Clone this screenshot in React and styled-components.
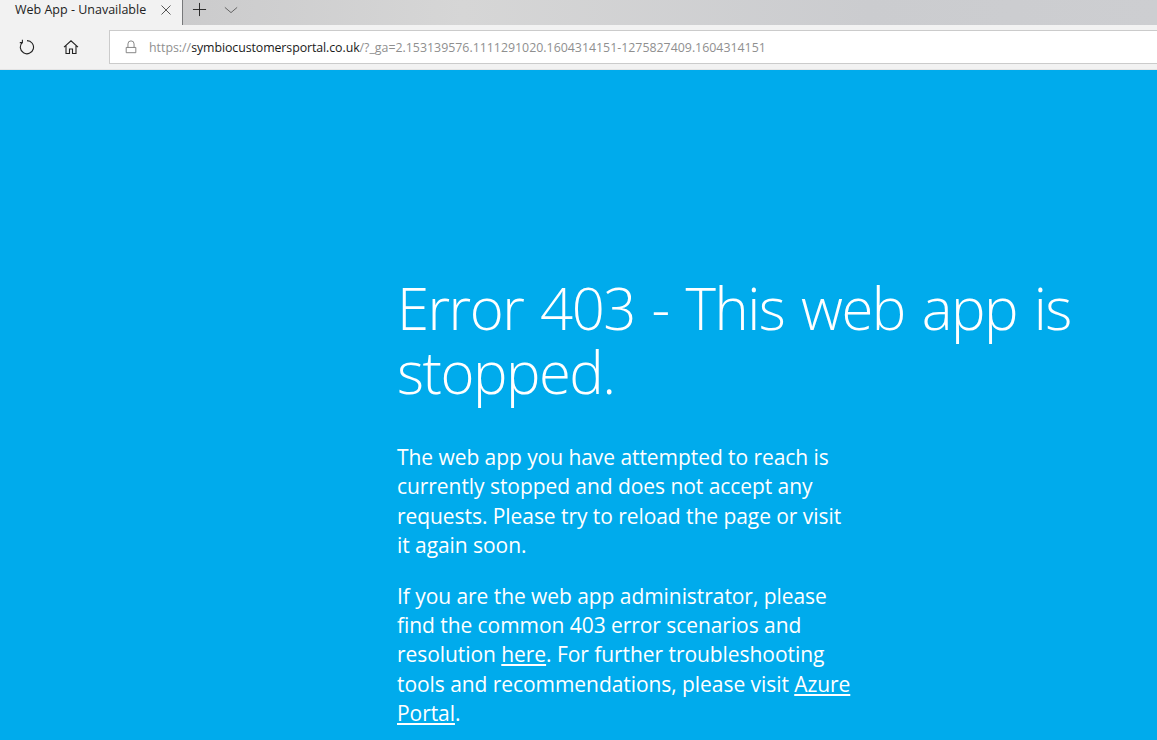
import React from 'react'
import styled, { createGlobalStyle } from 'styled-components'

const Global = createGlobalStyle`
  html, body { margin: 0; padding: 0; height: 100%; overflow: hidden; background: #00abec; }
  #root { height: 100%; }
`

const Page = styled.div`
  width: 1157px;
  height: 740px;
  display: flex;
  flex-direction: column;
  overflow: hidden;
  font-family: "Open Sans", "Noto Sans", sans-serif;
`

const TabStrip = styled.div`
  height: 25px;
  flex: none;
  display: flex;
  align-items: stretch;
  background: linear-gradient(90deg, #c4c4c6 0%, #d6d6d6 40%, #cbcccf 75%, #cdced1 100%);
`

const Tab = styled.div`
  width: 183px;
  display: flex;
  align-items: center;
  justify-content: space-between;
  box-sizing: border-box;
  padding: 0 10px 6px 15px;
  background: #f2f2f2;
  border-right: 1px solid #77787a;
  font-size: 12.5px;
  color: #222;
`

const TabAction = styled.div`
  display: flex;
  align-items: center;
  justify-content: center;
  width: 32px;
  padding-bottom: 6px;
  color: ${p => p.$color || '#222'};
`

const Toolbar = styled.div`
  height: 45px;
  flex: none;
  box-sizing: border-box;
  display: flex;
  align-items: center;
  padding: 5px 0 6px 0;
  background: #f2f2f2;
  border-bottom: 1px solid #e4e4e4;
`

const ToolButton = styled.div`
  width: 44px;
  display: flex;
  justify-content: center;
  color: #222;
  &:first-child { margin-left: 5px; }
`

const Address = styled.div`
  flex: 1;
  height: 34px;
  margin-left: 16px;
  box-sizing: border-box;
  display: flex;
  align-items: center;
  gap: 11px;
  padding-left: 14px;
  background: #fff;
  border: 1px solid #cbcbcb;
  border-right: none;
  font-size: 12.36px;
  color: #8f8f8f;
  white-space: nowrap;
  svg { color: #777; }
`

const Url = styled.span`
  padding-top: 1px;
`

const Host = styled.span`
  color: #1a1a1a;
  letter-spacing: -0.08px;
`

const Content = styled.main`
  flex: 1;
  min-height: 0;
  background: #00abec;
  color: #fff;
  padding: 206px 0 0 397px;
`

const Heading = styled.h1`
  margin: 0;
  font-size: 58px;
  line-height: 64px;
  font-weight: 300;
  letter-spacing: -1.5px;
  word-spacing: 3.2px;
  width: 720px;
`

const Para = styled.p`
  margin: 0;
  width: 456px;
  font-size: 21px;
  line-height: 29.4px;
  font-weight: 400;
  letter-spacing: -0.06px;
  & + & { margin-top: 21px; }
  h1 + & { margin-top: 39px; }
`

const Link = styled.a`
  color: inherit;
  text-decoration: underline;
`

function Icon({ size = 16, children, sw = 1 }) {
  return (
    <svg width={size} height={size} viewBox="0 0 16 16" fill="none" stroke="currentColor" strokeWidth={sw}>
      {children}
    </svg>
  )
}

export default function App() {
  return (
    <Page>
      <Global />
      <TabStrip>
        <Tab>
          <span>Web App - Unavailable</span>
          <Icon size={12}><path d="M2 2l12 12M14 2L2 14" /></Icon>
        </Tab>
        <TabAction>
          <Icon size={15}><path d="M8 1v14M1 8h14" /></Icon>
        </TabAction>
        <TabAction $color="#555">
          <Icon size={14}><path d="M1 5l7 6 7-6" /></Icon>
        </TabAction>
      </TabStrip>
      <Toolbar>
        <ToolButton>
          <Icon size={16} sw={1.1}><path d="M3.4 3.4A6.6 6.6 0 1 0 8 1.6M3.4 0.8V3.6H0.8" /></Icon>
        </ToolButton>
        <ToolButton>
          <Icon size={16} sw={1.1}><path d="M1 8.2L8 1.8l7 6.4M3 6.6v7.9h3.5V10h3v4.5H13V6.6" /></Icon>
        </ToolButton>
        <Address>
          <Icon size={14}><path d="M2.5 8.5h11v6h-11zM4.5 8.5V4.5a3.5 3.5 0 0 1 7 0v4" /></Icon>
          <Url>https://<Host>symbiocustomersportal.co.uk</Host>/?_ga=2.153139576.1111291020.1604314151-1275827409.1604314151</Url>
        </Address>
      </Toolbar>
      <Content>
        <Heading>Error 403 - This web app is stopped.</Heading>
        <Para>The web app you have attempted to reach is currently stopped and does not accept any requests. Please try to reload the page or visit it again soon.</Para>
        <Para>If you are the web app administrator, please find the common 403 error scenarios and resolution <Link href="#">here</Link>. For further troubleshooting tools and recommendations, please visit <Link href="#">Azure Portal</Link>.</Para>
      </Content>
    </Page>
  )
}
